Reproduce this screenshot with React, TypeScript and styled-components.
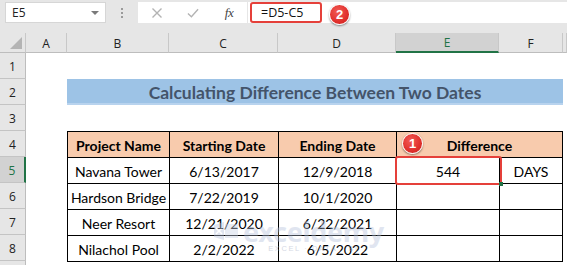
import React from 'react';
import styled, { createGlobalStyle, css } from 'styled-components';

const GlobalStyle = createGlobalStyle`
  html, body { margin: 0; padding: 0; background: #fff; }
  body { width: 567px; height: 265px; overflow: hidden; font-family: "Open Sans", "Liberation Sans", sans-serif; }
  #root { width: 567px; height: 265px; }
`;

const UI_FONT = `"Open Sans", "Noto Sans", "Liberation Sans", sans-serif`;
const CELL_FONT = `Lato, "Liberation Sans", sans-serif`;
const GREEN = '#217346';

const Window = styled.div`
  position: relative;
  width: 567px;
  height: 265px;
  display: flex;
  flex-direction: column;
  background: #fff;
  overflow: hidden;
`;

const FormulaBar = styled.div`
  height: 33px;
  box-sizing: border-box;
  flex: none;
  background: #e6e6e6;
  display: flex;
  align-items: flex-start;
  padding: 2px 0 0 5px;
`;

const NameBox = styled.div`
  width: 101px;
  height: 21px;
  box-sizing: border-box;
  background: #fff;
  border: 1px solid #d6d6d6;
  display: flex;
  align-items: center;
  justify-content: space-between;
  padding: 0 6px 0 6px;
  font-family: ${UI_FONT};
  font-size: 12px;
  color: #222;
`;

const DropArrow = styled.span`
  width: 0;
  height: 0;
  border-left: 4px solid transparent;
  border-right: 4px solid transparent;
  border-top: 4px solid #7a7a7a;
`;

const Grip = styled.div`
  width: 32px;
  height: 21px;
  display: flex;
  flex-direction: column;
  align-items: center;
  justify-content: center;
  gap: 2px;
`;

const GripDot = styled.span`
  width: 2px;
  height: 2px;
  background: #9a9a9a;
`;

const IconPanel = styled.div`
  width: 109px;
  height: 21px;
  background: #fff;
  display: flex;
  align-items: center;
  padding-left: 13px;
  gap: 24px;
  box-sizing: border-box;
`;

const IconSlot = styled.span`
  width: 12px;
  height: 12px;
  display: flex;
  align-items: center;
  justify-content: center;
`;

const Fx = styled.span`
  font-family: "Liberation Serif", "DejaVu Serif", serif;
  font-style: italic;
  font-size: 13px;
  color: #444;
  letter-spacing: -0.5px;
  width: 12px;
  text-align: center;
`;

const FormulaInput = styled.div`
  flex: 1;
  height: 21px;
  margin-left: 1px;
  background: #fff;
  display: flex;
  align-items: center;
  padding-left: 2px;
`;

const FormulaText = styled.div`
  width: 72px;
  height: 21px;
  box-sizing: border-box;
  border: 2px solid #e5403a;
  border-radius: 3px;
  display: flex;
  align-items: center;
  padding-left: 9px;
  font-family: ${UI_FONT};
  font-size: 12.5px;
  color: #111;
`;

const Badge = styled.div<{ $floating?: boolean }>`
  width: 21px;
  height: 21px;
  box-sizing: border-box;
  border-radius: 50%;
  background: radial-gradient(circle at 40% 35%, #f25a55 0%, #e0302c 60%, #c5221f 100%);
  border: 1px solid #fff;
  box-shadow: 0 1px 2px rgba(0, 0, 0, 0.45);
  color: #fff;
  font-family: "Liberation Sans", Arial, sans-serif;
  font-weight: 700;
  font-size: 13px;
  display: flex;
  align-items: center;
  justify-content: center;
  ${(p) =>
    p.$floating
      ? css`
          position: absolute;
          left: 5px;
          top: 1px;
        `
      : css`
          margin-left: 7px;
          margin-top: 4px;
        `}
`;

const Sheet = styled.div`
  display: grid;
  grid-template-columns: 26px 41px 102px 109px 118px 103px 64px 4px;
  grid-template-rows: 20px repeat(9, 26px);
  flex: none;
`;

const Corner = styled.div`
  grid-column: 1;
  grid-row: 1;
  background: #e6e6e6;
  border-right: 1px solid #c8c8c8;
  border-bottom: 1px solid #bdbdbd;
  display: flex;
  align-items: flex-end;
  justify-content: flex-end;
  padding: 0 3px 3px 0;
`;

const ColHeader = styled.div<{ $col: number; $active?: boolean }>`
  grid-column: ${(p) => p.$col};
  grid-row: 1;
  background: ${(p) => (p.$active ? '#d2d2d2' : '#e6e6e6')};
  border-right: 1px solid #c8c8c8;
  border-bottom: ${(p) => (p.$active ? `2px solid ${GREEN}` : '1px solid #bdbdbd')};
  display: flex;
  align-items: center;
  justify-content: center;
  font-family: ${UI_FONT};
  font-size: 12px;
  color: ${(p) => (p.$active ? GREEN : '#222')};
  padding-top: 1px;
`;

const RowHeader = styled.div<{ $row: number; $active?: boolean }>`
  grid-column: 1;
  grid-row: ${(p) => p.$row};
  background: ${(p) => (p.$active ? '#d2d2d2' : '#e6e6e6')};
  border-right: ${(p) => (p.$active ? `2px solid ${GREEN}` : '1px solid #bdbdbd')};
  border-bottom: 1px solid #c4c4c4;
  display: flex;
  align-items: flex-end;
  justify-content: center;
  padding-bottom: 3px;
  font-family: ${UI_FONT};
  font-size: 12px;
  color: ${(p) => (p.$active ? GREEN : '#222')};
  overflow: hidden;
`;

const TitleBand = styled.div`
  grid-column: 3 / span 5;
  grid-row: 3;
  background: #9dc3e6;
  box-shadow: inset 0 -2px 0 #b8d3ee;
  display: flex;
  align-items: center;
  justify-content: center;
  font-family: ${CELL_FONT};
  font-weight: 700;
  font-size: 17.5px;
  color: #44546a;
  padding-top: 1px;
`;

const DataTable = styled.div`
  grid-column: 3 / span 5;
  grid-row: 5 / span 5;
  display: grid;
  grid-template-columns: 101px 108px 117px 102px 62px;
  grid-template-rows: repeat(5, 1fr);
  gap: 1px;
  padding: 1px;
  background: #000;
  height: 131px;
  box-sizing: border-box;
`;

const Cell = styled.div<{ $head?: boolean; $selected?: boolean; $span?: number }>`
  position: relative;
  grid-column: span ${(p) => p.$span ?? 1};
  background: ${(p) => (p.$head ? '#f8cbad' : '#fff')};
  display: flex;
  align-items: center;
  justify-content: center;
  font-family: ${CELL_FONT};
  font-size: 14px;
  font-weight: ${(p) => (p.$head ? 700 : 400)};
  color: #000;
  padding-top: 2px;
  white-space: nowrap;
  ${(p) =>
    p.$selected &&
    css`
      &::after {
        content: '';
        position: absolute;
        left: -2px;
        top: -2px;
        right: -3px;
        bottom: -2px;
        border: 2.5px solid #e5403a;
        border-radius: 3px;
        z-index: 2;
      }
    `}
`;

const FillHandle = styled.span`
  position: absolute;
  right: -4px;
  bottom: -3px;
  width: 4px;
  height: 4px;
  background: ${GREEN};
  z-index: 3;
`;

const Watermark = styled.div`
  position: absolute;
  left: 212px;
  top: 221px;
  display: flex;
  align-items: flex-start;
  gap: 3px;
  opacity: 0.42;
  pointer-events: none;
`;

const WmWords = styled.div`
  display: flex;
  flex-direction: column;
  align-items: center;
`;

const WmBrand = styled.span`
  font-family: "Noto Sans", "Open Sans", sans-serif;
  font-weight: 700;
  font-size: 27px;
  line-height: 22px;
  color: #b7c3dc;
  letter-spacing: -0.3px;
`;

const WmTag = styled.span`
  font-family: "Liberation Sans", sans-serif;
  font-size: 7.5px;
  letter-spacing: 1.6px;
  color: #9aa5bc;
  margin-top: 1px;
`;

const cols = ['A', 'B', 'C', 'D', 'E', 'F', ''];
const rows = [
  ['Navana Tower', '6/13/2017', '12/9/2018', '544', 'DAYS'],
  ['Hardson Bridge', '7/22/2019', '10/1/2020', '', ''],
  ['Neer Resort', '12/21/2020', '6/22/2021', '', ''],
  ['Nilachol Pool', '2/2/2022', '6/5/2022', '', ''],
];

export default function App() {
  return (
    <Window>
      <GlobalStyle />
      <FormulaBar>
        <NameBox>
          <span>E5</span>
          <DropArrow />
        </NameBox>
        <Grip>
          <GripDot />
          <GripDot />
          <GripDot />
        </Grip>
        <IconPanel>
          <IconSlot>
            <svg width="12" height="12" viewBox="0 0 12 12">
              <path d="M1.5 1.5 L10.5 10.5 M10.5 1.5 L1.5 10.5" stroke="#b3b3b3" strokeWidth="1.4" fill="none" />
            </svg>
          </IconSlot>
          <IconSlot>
            <svg width="13" height="12" viewBox="0 0 13 12">
              <path d="M1 6.5 L4.8 10 L12 2" stroke="#b3b3b3" strokeWidth="1.5" fill="none" />
            </svg>
          </IconSlot>
          <Fx>fx</Fx>
        </IconPanel>
        <FormulaInput>
          <FormulaText>=D5-C5</FormulaText>
          <Badge>2</Badge>
        </FormulaInput>
      </FormulaBar>
      <Sheet>
        <Corner>
          <svg width="12" height="12" viewBox="0 0 12 12">
            <path d="M12 0 L12 12 L0 12 Z" fill="#b4b4b4" />
          </svg>
        </Corner>
        {cols.map((c, i) => (
          <ColHeader key={i} $col={i + 2} $active={c === 'E'}>
            {c}
          </ColHeader>
        ))}
        {Array.from({ length: 9 }, (_, i) => (
          <RowHeader key={i} $row={i + 2} $active={i + 1 === 5}>
            {i + 1}
          </RowHeader>
        ))}
        <TitleBand>Calculating Difference Between Two Dates</TitleBand>
        <DataTable>
          <Cell $head>Project Name</Cell>
          <Cell $head>Starting Date</Cell>
          <Cell $head>Ending Date</Cell>
          <Cell $head $span={2}>
            <Badge $floating>1</Badge>
            Difference
          </Cell>
          {rows.map((r, ri) =>
            r.map((v, ci) => (
              <Cell key={`${ri}-${ci}`} $selected={ri === 0 && ci === 3}>
                {v}
                {ri === 0 && ci === 3 && <FillHandle />}
              </Cell>
            ))
          )}
        </DataTable>
      </Sheet>
      <Watermark>
        <svg width="28" height="20" viewBox="0 0 28 20">
          <path d="M2 4 L12 1 L12 19 L2 16 Z" fill="#b7c3dc" />
          <path d="M13 3 L26 3 L26 17 L13 17 Z" fill="#c9d2e6" />
          <path d="M4 7 L10 13 M10 7 L4 13" stroke="#fff" strokeWidth="1.6" />
        </svg>
        <WmWords>
          <WmBrand>exceldemy</WmBrand>
          <WmTag>EXCEL · DATA · BI</WmTag>
        </WmWords>
      </Watermark>
    </Window>
  );
}
